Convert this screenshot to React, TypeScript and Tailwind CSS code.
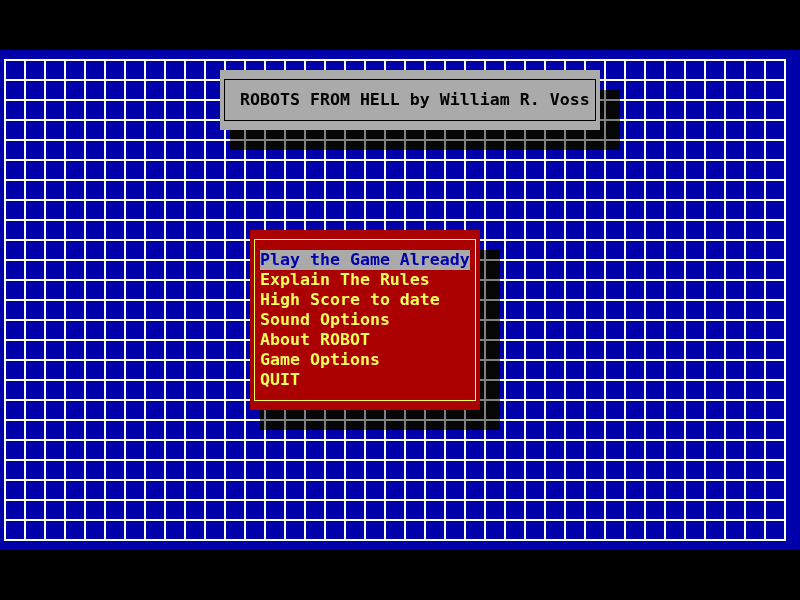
import React from "react";

const items = [
  "Explain The Rules",
  "High Score to date",
  "Sound Options",
  "About ROBOT",
  "Game Options",
  "QUIT",
];

export default function App() {
  return (
    <div className="w-[800px] h-[600px] bg-black flex flex-col font-['DejaVu_Sans_Mono',monospace] font-bold text-[16.6px]">
      <div className="h-[50px] shrink-0" />
      <div className="relative h-[500px] shrink-0 bg-[#0000aa]">
        <div className="absolute left-[4px] top-[9px] w-[782px] h-[482px] bg-[linear-gradient(to_right,#ffffff_2px,transparent_2px),linear-gradient(to_bottom,#ffffff_2px,transparent_2px)] bg-[size:20px_20px]" />

        {/* title shadow */}
        <div className="absolute left-[230px] top-[40px] w-[390px] h-[60px] backdrop-grayscale backdrop-brightness-50" />
        {/* title box */}
        <div className="absolute left-[220px] top-[20px] w-[380px] h-[60px] bg-[#aaaaaa] px-[4px] py-[9px]">
          <div className="h-full border border-black flex items-center pl-[15px] text-black leading-[20px] whitespace-pre">
            ROBOTS FROM HELL by William R. Voss
          </div>
        </div>

        {/* menu shadow */}
        <div className="absolute left-[260px] top-[200px] w-[240px] h-[180px] backdrop-grayscale backdrop-brightness-50" />
        {/* menu box */}
        <div className="absolute left-[250px] top-[180px] w-[230px] h-[180px] bg-[#aa0000] px-[4px] py-[9px]">
          <div className="h-full border border-[#ffff55] pl-[5px] pt-[10px] flex flex-col">
            <div className="h-[20px] leading-[20px] w-[210px] bg-[#aaaaaa] text-[#0000aa] whitespace-pre">
              Play the Game Already
            </div>
            {items.map((t) => (
              <div key={t} className="h-[20px] leading-[20px] text-[#ffff55] whitespace-pre">
                {t}
              </div>
            ))}
          </div>
        </div>
      </div>
      <div className="h-[50px] shrink-0" />
    </div>
  );
}
